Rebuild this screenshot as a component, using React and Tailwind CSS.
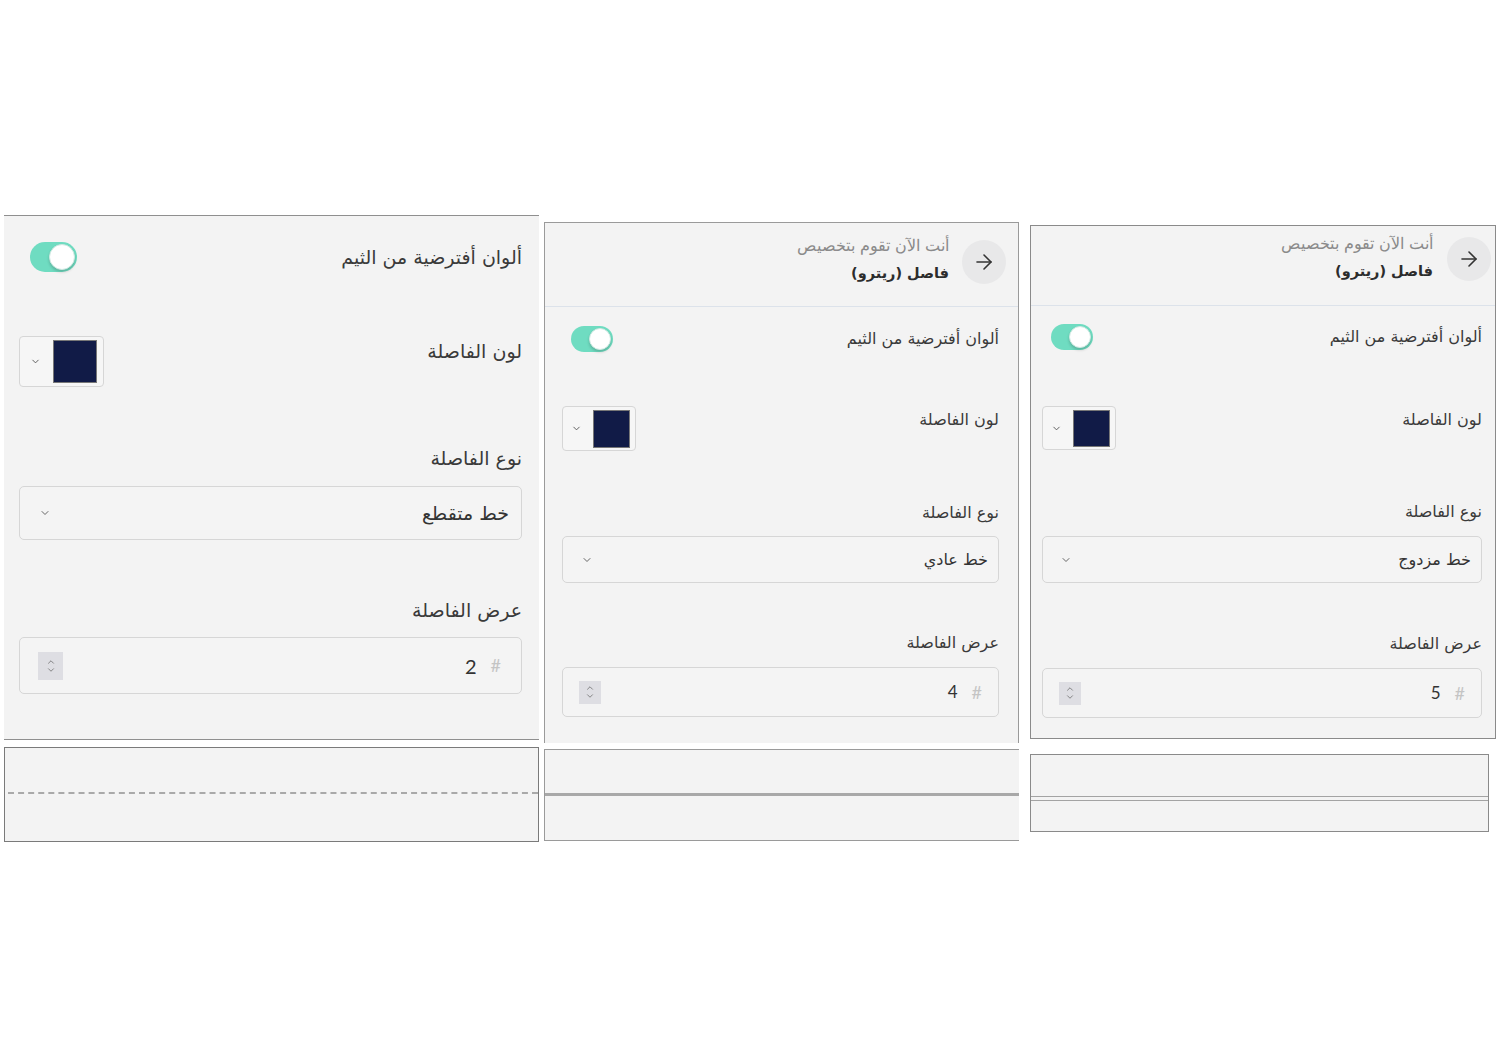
import React from "react";
import { ArrowRight, ChevronDown, ChevronUp } from "lucide-react";

const arabic = "font-['DejaVu_Sans',sans-serif]";

const panels = [
  {
    col: "w-[535px] mt-[215px]",
    box: "h-[525px] border-y border-[#8f8f8f]",
    header: null,
    body: "pl-[15px] pr-[17px] pt-[26px]",
    text: "text-[19px] leading-[24px]",
    toggleRow: "h-[30px]",
    track: "w-[47px] h-[30px] ml-[11px]",
    knob: "w-[26px] h-[26px]",
    colorRow: "mt-[64px]",
    colorLabel: "mt-[3px]",
    colorBox: "w-[85px] h-[51px] pl-[10px] pr-[6px]",
    swatch: "w-[44px] h-[43px]",
    typeLabel: "mt-[59px]",
    select: "mt-[16px] h-[54px] pr-[12px] pl-[19px]",
    widthLabel: "mt-[58px]",
    input: "mt-[15px] h-[57px] pr-[20px] pl-[18px]",
    spinner: "w-[25px] h-[28px]",
    num: "text-[20px]",
    value: "2",
    option: "خط متقطع",
    strip: "mt-[7px] h-[95px] border border-[#7a7a7a]",
    line: "mt-[44px] ml-[3px] border-t-2 border-dashed border-[#a9a9a9]",
  },
  {
    col: "w-[475px] mt-[222px] ml-[5px]",
    box: "h-[521px] border-x border-t border-[#9a9a9a]",
    header: {
      wrap: "h-[84px] pr-[12px]",
      circle: "mt-[17px]",
      text: "mt-[13px] mr-[13px]",
    },
    body: "pl-[17px] pr-[19px] pt-[19px]",
    text: "text-[16px] leading-[22px]",
    toggleRow: "h-[26px]",
    track: "w-[42px] h-[26px] ml-[9px]",
    knob: "w-[22px] h-[22px]",
    colorRow: "mt-[54px]",
    colorLabel: "mt-[3px]",
    colorBox: "w-[74px] h-[45px] pl-[8px] pr-[5px]",
    swatch: "w-[37px] h-[38px]",
    typeLabel: "mt-[51px]",
    select: "mt-[12px] h-[47px] pr-[10px] pl-[18px]",
    widthLabel: "mt-[49px]",
    input: "mt-[13px] h-[50px] pr-[16px] pl-[16px]",
    spinner: "w-[22px] h-[23px]",
    num: "text-[17px]",
    value: "4",
    option: "خط عادي",
    strip: "mt-[6px] h-[92px] border-y border-l border-[#9a9a9a]",
    line: "mt-[43px] h-[3px] bg-[#a8a8a8]",
  },
  {
    col: "w-[466px] mt-[225px] ml-[11px]",
    box: "h-[514px] border border-[#8a8a8a]",
    header: {
      wrap: "h-[80px] pr-[4px]",
      circle: "mt-[11px]",
      text: "mt-[8px] mr-[14px]",
    },
    body: "pl-[11px] pr-[13px] pt-[18px]",
    text: "text-[16px] leading-[22px]",
    toggleRow: "h-[26px]",
    track: "w-[42px] h-[26px] ml-[9px]",
    knob: "w-[22px] h-[22px]",
    colorRow: "mt-[56px]",
    colorLabel: "mt-[3px]",
    colorBox: "w-[74px] h-[44px] pl-[8px] pr-[5px]",
    swatch: "w-[37px] h-[37px]",
    typeLabel: "mt-[51px]",
    select: "mt-[13px] h-[47px] pr-[10px] pl-[17px]",
    widthLabel: "mt-[50px]",
    input: "mt-[13px] h-[50px] pr-[16px] pl-[16px]",
    spinner: "w-[22px] h-[23px]",
    num: "text-[17px]",
    value: "5",
    option: "خط مزدوج",
    strip: "mt-[15px] w-[459px] h-[78px] border border-[#8a8a8a]",
    line: "mt-[41px] h-[5px] border-y border-[#a3a3a3]",
  },
];

function Toggle({ p }) {
  return (
    <div className={`relative shrink-0 rounded-full bg-[#6fdcc1] ${p.track}`}>
      <div
        className={`absolute right-[2px] top-1/2 -translate-y-1/2 rounded-full bg-white border border-[#cfe9e2] shadow-[0_2px_3px_rgba(0,0,0,0.18)] ${p.knob}`}
      />
    </div>
  );
}

function Panel({ p }) {
  return (
    <div className={`shrink-0 ${p.col}`}>
      <div dir="rtl" className={`bg-[#f3f3f3] ${arabic} ${p.box}`}>
        {p.header && (
          <div className={`flex items-start border-b border-[#dce2ea] ${p.header.wrap}`}>
            <div className={`w-[44px] h-[44px] rounded-full bg-[#e8e8e9] flex items-center justify-center ${p.header.circle}`}>
              <ArrowRight size={24} strokeWidth={1.6} className="text-[#333]" />
            </div>
            <div className={`flex flex-col ${p.header.text}`}>
              <span className="text-[15.5px] leading-[20px] text-[#8a8a8a] font-light">أنت الآن تقوم بتخصيص</span>
              <span className="text-[14.5px] leading-[22px] font-bold text-[#2c2c2c] mt-[6px]">فاصل (ريترو)</span>
            </div>
          </div>
        )}
        <div className={p.body}>
          <div className={`flex items-center justify-between ${p.toggleRow}`}>
            <span className={`text-[#3a3a3a] ${p.text}`}>ألوان أفترضية من الثيم</span>
            <Toggle p={p} />
          </div>

          <div className={`flex items-start justify-between ${p.colorRow}`}>
            <span className={`text-[#3a3a3a] ${p.text} ${p.colorLabel}`}>لون الفاصلة</span>
            <div className={`flex items-center justify-between rounded-[4px] border border-[#d6d6d6] bg-[#f6f6f6] ${p.colorBox}`}>
              <div className={`bg-[#111b47] border border-[#777] ${p.swatch}`} />
              <ChevronDown size={11} strokeWidth={2} className="text-[#555]" />
            </div>
          </div>

          <div className={`text-[#3a3a3a] ${p.text} ${p.typeLabel}`}>نوع الفاصلة</div>
          <div className={`flex items-center justify-between rounded-[5px] border border-[#d6d6d6] bg-[#f4f4f4] ${p.select}`}>
            <span className={`text-[#333] ${p.text}`}>{p.option}</span>
            <ChevronDown size={12} strokeWidth={2} className="text-[#666]" />
          </div>

          <div className={`text-[#3a3a3a] ${p.text} ${p.widthLabel}`}>عرض الفاصلة</div>
          <div className={`flex items-center rounded-[5px] border border-[#d6d6d6] bg-[#f4f4f4] ${p.input}`}>
            <span className="text-[#c4c4c4] text-[18px] font-['Lato',sans-serif]">#</span>
            <span className={`mr-[14px] text-[#333] font-['Lato',sans-serif] ${p.num}`}>{p.value}</span>
            <div className={`mr-auto flex flex-col items-center justify-center bg-[#dedee3] ${p.spinner}`}>
              <ChevronUp size={10} strokeWidth={1.8} className="text-[#666] -mb-[1px]" />
              <ChevronDown size={10} strokeWidth={1.8} className="text-[#666] -mt-[1px]" />
            </div>
          </div>
        </div>
      </div>
      <div className={`bg-[#f3f3f3] ${p.strip}`}>
        <div className={p.line} />
      </div>
    </div>
  );
}

export default function App() {
  return (
    <div className="w-[1500px] h-[1057px] bg-white flex items-start pl-[4px]">
      {panels.map((p, i) => (
        <Panel key={i} p={p} />
      ))}
    </div>
  );
}
